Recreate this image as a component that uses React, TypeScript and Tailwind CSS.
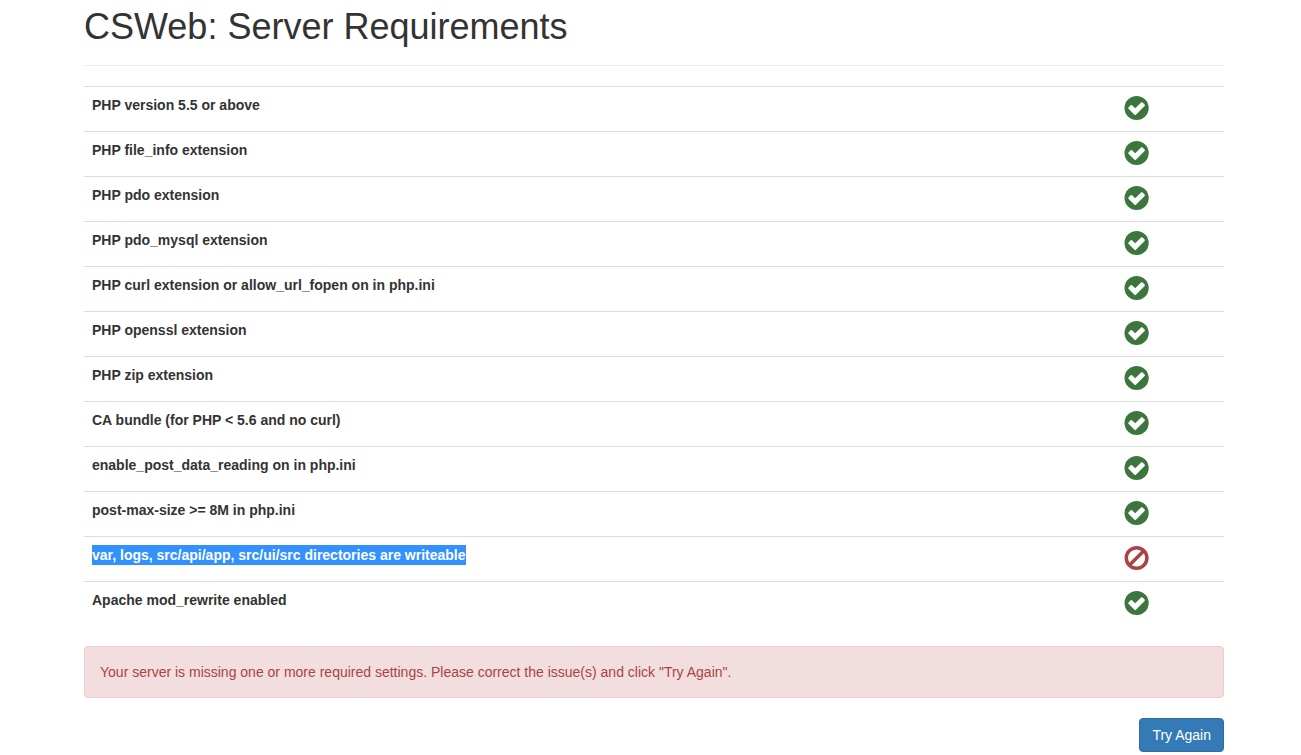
import React from "react";

interface Requirement {
  label: string;
  passed: boolean;
  selected?: boolean;
}

const requirements: Requirement[] = [
  { label: "PHP version 5.5 or above", passed: true },
  { label: "PHP file_info extension", passed: true },
  { label: "PHP pdo extension", passed: true },
  { label: "PHP pdo_mysql extension", passed: true },
  { label: "PHP curl extension or allow_url_fopen on in php.ini", passed: true },
  { label: "PHP openssl extension", passed: true },
  { label: "PHP zip extension", passed: true },
  { label: "CA bundle (for PHP < 5.6 and no curl)", passed: true },
  { label: "enable_post_data_reading on in php.ini", passed: true },
  { label: "post-max-size >= 8M in php.ini", passed: true },
  {
    label: "var, logs, src/api/app, src/ui/src directories are writeable",
    passed: false,
    selected: true,
  },
  { label: "Apache mod_rewrite enabled", passed: true },
];

function PassedIcon() {
  return (
    <svg viewBox="0 0 25 28" className="block h-7 w-[25px]" role="img" aria-label="Passed">
      <circle cx="12.6" cy="13" r="12.1" fill="#3c763d" />
      <path
        d="M4.5 12.4 L6.6 10.3 Q7.3 9.6 8 10.3 L11.2 13.3 L17.1 7.4 Q17.8 6.7 18.5 7.4 L20.6 9.5 Q21.3 10.2 20.6 10.9 L11.9 19.8 Q11.2 20.5 10.5 19.8 L4.5 13.8 Q3.8 13.1 4.5 12.4 Z"
        fill="#fff"
      />
    </svg>
  );
}

function FailedIcon() {
  return (
    <svg viewBox="0 0 25 28" className="block h-7 w-[25px]" role="img" aria-label="Failed">
      <g fill="none" stroke="#a94442" strokeWidth="3.5">
        <circle cx="12.6" cy="13" r="10.3" />
        <path d="M5.6 20 L19.6 6" />
      </g>
    </svg>
  );
}

export default function App() {
  return (
    <main className="bg-white pt-[7px] pr-[77px] pb-[3px] pl-[84px] font-['Liberation_Sans',Arial,sans-serif] text-[14px] leading-5 text-[#333]">
      <header className="mb-5 border-b border-[#eee] pb-[18px]">
        <h1 className="text-[36px] leading-10 font-medium">CSWeb: Server Requirements</h1>
      </header>

      <table className="mb-5 w-full border-separate border-spacing-0">
        <tbody>
          {requirements.map((req) => (
            <tr key={req.label}>
              <th scope="row" className="border-t border-[#ddd] p-2 text-left align-top font-bold">
                {req.selected ? (
                  <span className="inline-block bg-[#3390ff] text-white">{req.label}</span>
                ) : (
                  req.label
                )}
              </th>
              <td className="w-27 border-t border-[#ddd] p-2 align-top">
                {req.passed ? <PassedIcon /> : <FailedIcon />}
              </td>
            </tr>
          ))}
        </tbody>
      </table>

      <div
        role="alert"
        className="mb-5 rounded-[4px] border border-[#ebccd1] bg-[#f2dede] p-[15px] text-[#a94442]"
      >
        Your server is missing one or more required settings. Please correct the issue(s) and click
        "Try Again".
      </div>

      <div className="flex justify-end">
        <button
          type="button"
          className="cursor-pointer rounded-[4px] border border-[#2e6da4] bg-[#337ab7] px-3 py-[6px] text-white hover:bg-[#286090]"
        >
          Try Again
        </button>
      </div>
    </main>
  );
}
